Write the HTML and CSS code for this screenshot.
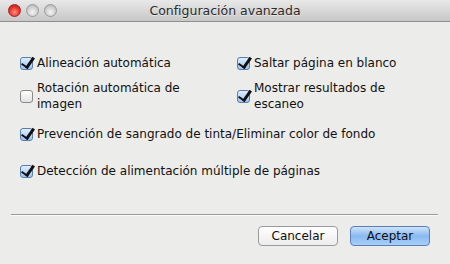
FILE: index.html
```html
<!DOCTYPE html>
<html lang="es">
<head>
<meta charset="utf-8">
<link rel="stylesheet" href="styles.css">
</head>
<body>
<div class="window">
  <div class="titlebar">
    <div class="lights">
      <span class="light red"></span>
      <span class="light gray"></span>
      <span class="light gray"></span>
    </div>
    <div class="title">Configuración avanzada</div>
  </div>
  <div class="content">
    <div class="grid">
      <label class="opt"><span class="box checked"></span><span class="txt">Alineación automática</span></label>
      <label class="opt"><span class="box checked"></span><span class="txt">Saltar página en blanco</span></label>
      <label class="opt two"><span class="box"></span><span class="txt">Rotación automática de<br>imagen</span></label>
      <label class="opt two"><span class="box checked"></span><span class="txt">Mostrar resultados de<br>escaneo</span></label>
    </div>
    <label class="opt wide first"><span class="box checked"></span><span class="txt">Prevención de sangrado de tinta/Eliminar color de fondo</span></label>
    <label class="opt wide"><span class="box checked"></span><span class="txt">Detección de alimentación múltiple de páginas</span></label>
    <div class="sep"></div>
    <div class="buttons">
      <button class="btn">Cancelar</button>
      <button class="btn primary">Aceptar</button>
    </div>
  </div>
</div>
</body>
</html>
```
FILE: styles.css
```css
* { box-sizing: border-box; }
html, body { margin: 0; padding: 0; }
body {
  width: 450px;
  height: 264px;
  overflow: hidden;
  font-family: "DejaVu Sans", sans-serif;
  font-size: 12px;
  color: #111;
  background: #ececea;
}
.window { width: 450px; height: 264px; display: flex; flex-direction: column; }
.titlebar {
  height: 22px;
  position: relative;
  background: linear-gradient(#e8e8e8, #c8c8c8);
  border-bottom: 1px solid #8e8e8e;
  display: flex;
  align-items: center;
  justify-content: center;
}
.lights {
  position: absolute;
  left: 8px;
  top: 4px;
  display: flex;
  gap: 5px;
}
.light {
  width: 13px;
  height: 13px;
  border-radius: 50%;
  display: block;
}
.light.red {
  background: radial-gradient(circle at 50% 65%, #ff8f87 0%, #e8342a 55%, #b21a12 100%);
  border: 1px solid #a3231c;
}
.light.gray {
  background: radial-gradient(circle at 50% 65%, #f4f4f4 0%, #cfcfcf 55%, #a9a9a9 100%);
  border: 1px solid #9a9a9a;
}
.title {
  font-size: 12.5px;
  color: #2a2a2a;
  text-shadow: 0 1px 0 rgba(255,255,255,0.5);
}
.content {
  flex: 1;
  padding: 33px 12px 0 20px;
  display: flex;
  flex-direction: column;
}
.grid {
  display: grid;
  grid-template-columns: 217px 1fr;
  row-gap: 9px;
}
.opt {
  display: flex;
  align-items: flex-start;
  line-height: 16px;
}
.opt.two { align-items: center; }
.opt.wide { margin-top: 21px; }
.opt.wide.first { margin-top: 14px; }
.box {
  width: 13px;
  height: 13px;
  flex: none;
  margin-right: 4px;
  margin-top: 2px;
  border: 1px solid #8a8a8a;
  border-radius: 3px;
  background: linear-gradient(#ffffff, #e2e2e2);
  position: relative;
}
.opt.two .box { margin-top: 0; }
.box.checked {
  border-color: #5a7dab;
  background: linear-gradient(#dfeeff, #9dc3ef);
}
.box.checked::after {
  content: "";
  position: absolute;
  left: 3px;
  top: -3px;
  width: 5px;
  height: 11px;
  border-right: 3px solid #111;
  border-bottom: 2px solid #111;
  transform: rotate(35deg);
}
.sep {
  margin: 35px 0 0 -9px;
  height: 2px;
  border-top: 1px solid #9a9a9a;
  border-bottom: 1px solid #fafafa;
}
.buttons {
  display: flex;
  justify-content: flex-end;
  gap: 12px;
  padding-right: 8px;
  margin-top: 10px;
}
.btn {
  width: 80px;
  height: 20px;
  font-family: "DejaVu Sans", sans-serif;
  font-size: 12px;
  color: #111;
  border: 1px solid #9a9a9a;
  border-radius: 4px;
  background: linear-gradient(#ffffff, #ececec);
  padding: 0;
}
.btn.primary {
  border-color: #5c7fb3;
  background: linear-gradient(#cfe3fb, #8ab9ef 50%, #a8cff8);
}
```
